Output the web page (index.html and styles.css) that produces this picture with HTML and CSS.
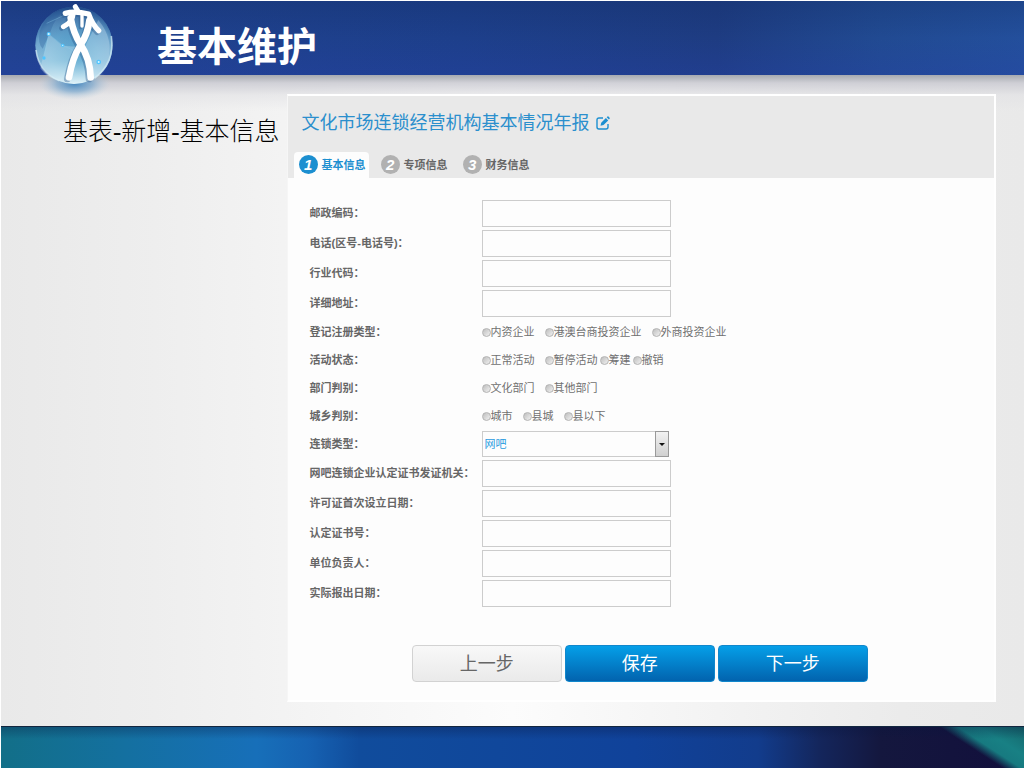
FILE: index.html
```html
<!DOCTYPE html>
<html lang="zh-CN">
<head>
<meta charset="utf-8">
<meta name="viewport" content="width=device-width, initial-scale=1">
<title>基本维护</title>
<link rel="stylesheet" href="styles.css">
</head>
<body>
<header class="banner">
  <svg class="logo" viewBox="0 0 330 300" aria-hidden="true">
    <defs>
      <radialGradient id="globe" cx="0.5" cy="0.62" r="0.62">
        <stop offset="0" stop-color="#4d9fcb"/>
        <stop offset="0.5" stop-color="#6fb2d6"/>
        <stop offset="0.8" stop-color="#78aed2"/>
        <stop offset="1" stop-color="#3466a3"/>
      </radialGradient>
      <linearGradient id="shine" x1="0" y1="0" x2="0" y2="1">
        <stop offset="0" stop-color="#173c7c" stop-opacity="0.75"/>
        <stop offset="0.4" stop-color="#3f7eb5" stop-opacity="0.3"/>
        <stop offset="0.7" stop-color="#c4e4f0" stop-opacity="0.2"/>
        <stop offset="1" stop-color="#eefbfd" stop-opacity="0.9"/>
      </linearGradient>
      <radialGradient id="glow">
        <stop offset="0" stop-color="#3b82bd" stop-opacity="0.95"/>
        <stop offset="0.5" stop-color="#6ba0cb" stop-opacity="0.6"/>
        <stop offset="1" stop-color="#b9cfe0" stop-opacity="0"/>
      </radialGradient>
      <g id="mark" fill="none" stroke-linecap="round" stroke-linejoin="round">
        <path d="M166 20L174 34" stroke-width="15"/>
        <path d="M136 40Q164 32 206 42Q216 72 236 92" stroke-width="16"/>
        <path d="M160 40Q158 66 130 80" stroke-width="15"/>
        <path d="M152 54Q160 100 182 134Q210 176 212 232" stroke-width="20"/>
        <path d="M208 62Q204 102 180 138Q158 172 147 232" stroke-width="20"/>
        <path d="M186 44V78" stroke-width="10"/>
      </g>
    </defs>
    <ellipse cx="164" cy="250" rx="108" ry="50" fill="url(#glow)"/>
    <circle cx="162" cy="136" r="116" fill="url(#globe)"/>
    <circle cx="162" cy="136" r="116" fill="url(#shine)"/>
    <path d="M86 103L61 205Q80 235 125 245L170 140L128 137Z" fill="#dff2fa" opacity="0.3"/>
    <path d="M235 60Q285 120 262 190Q240 235 212 242L190 150Z" fill="#d3ecf7" opacity="0.3"/>
    <path d="M60 92Q78 40 140 24Q104 52 90 98L68 146Q52 130 60 92Z" fill="#2c5f9c" opacity="0.35"/>
    <path d="M48 150Q56 218 118 242M274 108Q284 192 224 234" fill="none" stroke="#d8f0f8" stroke-width="5" opacity="0.65"/>
    <path d="M86 102L72 174M86 102L128 136L236 186M80 70L150 38" fill="none" stroke="#8fd0ee" stroke-width="2" opacity="0.5"/>
    <g fill="#50c5ff"><circle cx="86" cy="102" r="6"/><circle cx="128" cy="136" r="5"/><circle cx="72" cy="174" r="5"/><circle cx="236" cy="186" r="7"/></g>
    <g fill="#d9f6ff"><circle cx="86" cy="102" r="3"/><circle cx="128" cy="136" r="2"/><circle cx="236" cy="186" r="3"/></g>
    <use href="#mark" x="-5" y="5" stroke="#234f83" opacity="0.35"/>
    <use href="#mark" stroke="#fff"/>
  </svg>
  <h1 class="banner-title">基本维护</h1>
</header>

<main class="stage">
  <h2 class="crumb">基表-新增-基本信息</h2>
  <section class="panel">
    <div class="panel-head">
      <h3 class="panel-title">文化市场连锁经营机构基本情况年报
        <svg class="edit-icon" viewBox="0 0 14 14" aria-hidden="true">
          <path d="M7 2H3Q1 2 1 4V11Q1 13 3 13H10Q12 13 12 11V8" fill="none" stroke="#1c8fd0" stroke-width="1.4"/>
          <path d="M4.5 9.8L5.2 6.8L9.9 2.1L12.2 4.4L7.5 9.1ZM10.7 1.3L11.5 0.5Q12 0.1 12.5 0.6L13.6 1.7Q14 2.2 13.6 2.7L12.9 3.5Z" fill="#1c8fd0"/>
        </svg>
      </h3>
      <nav class="tabs">
        <a class="tab tab-active" href="#basic"><span class="num">1</span>基本信息</a>
        <a class="tab" href="#special"><span class="num">2</span>专项信息</a>
        <a class="tab" href="#finance"><span class="num">3</span>财务信息</a>
      </nav>
    </div>
    <form class="form" id="basic">
      <div class="row"><label class="label" for="zip">邮政编码：</label><input class="field" id="zip" type="text"></div>
      <div class="row"><label class="label" for="tel">电话(区号-电话号)：</label><input class="field" id="tel" type="text"></div>
      <div class="row"><label class="label" for="industry">行业代码：</label><input class="field" id="industry" type="text"></div>
      <div class="row"><label class="label" for="address">详细地址：</label><input class="field" id="address" type="text"></div>
      <div class="row row-short" role="radiogroup" aria-labelledby="l-reg">
        <span class="label" id="l-reg">登记注册类型：</span>
        <div class="options">
          <label class="option"><input class="radio" type="radio" name="reg">内资企业</label>
          <label class="option"><input class="radio" type="radio" name="reg">港澳台商投资企业</label>
          <label class="option"><input class="radio" type="radio" name="reg">外商投资企业</label>
        </div>
      </div>
      <div class="row row-short" role="radiogroup" aria-labelledby="l-state">
        <span class="label" id="l-state">活动状态：</span>
        <div class="options">
          <label class="option"><input class="radio" type="radio" name="state">正常活动</label>
          <div class="options options-tight">
            <label class="option"><input class="radio" type="radio" name="state">暂停活动</label>
            <label class="option"><input class="radio" type="radio" name="state">筹建</label>
            <label class="option"><input class="radio" type="radio" name="state">撤销</label>
          </div>
        </div>
      </div>
      <div class="row row-short" role="radiogroup" aria-labelledby="l-dept">
        <span class="label" id="l-dept">部门判别：</span>
        <div class="options">
          <label class="option"><input class="radio" type="radio" name="dept">文化部门</label>
          <label class="option"><input class="radio" type="radio" name="dept">其他部门</label>
        </div>
      </div>
      <div class="row row-short" role="radiogroup" aria-labelledby="l-area">
        <span class="label" id="l-area">城乡判别：</span>
        <div class="options">
          <label class="option"><input class="radio" type="radio" name="area">城市</label>
          <label class="option"><input class="radio" type="radio" name="area">县城</label>
          <label class="option"><input class="radio" type="radio" name="area">县以下</label>
        </div>
      </div>
      <div class="row row-short">
        <label class="label" for="chain">连锁类型：</label>
        <div class="select-wrap">
          <select class="select" id="chain"><option>网吧</option></select>
          <span class="select-arrow"></span>
        </div>
      </div>
      <div class="row"><label class="label" for="issuer">网吧连锁企业认定证书发证机关：</label><input class="field" id="issuer" type="text"></div>
      <div class="row"><label class="label" for="first">许可证首次设立日期：</label><input class="field" id="first" type="text"></div>
      <div class="row"><label class="label" for="cert">认定证书号：</label><input class="field" id="cert" type="text"></div>
      <div class="row"><label class="label" for="head">单位负责人：</label><input class="field" id="head" type="text"></div>
      <div class="row"><label class="label" for="report">实际报出日期：</label><input class="field" id="report" type="text"></div>
      <div class="actions">
        <button class="btn btn-plain" type="button">上一步</button>
        <button class="btn" type="button">保存</button>
        <button class="btn" type="button">下一步</button>
      </div>
    </form>
  </section>
</main>
<footer class="footer"></footer>
</body>
</html>
```
FILE: styles.css
```css
* { box-sizing: border-box; }

body {
  margin: 0;
  min-height: 100vh;
  display: flex;
  flex-direction: column;
  border: solid #fff;
  border-width: 1px 0 0 1px;
  font-family: "Liberation Sans", "Noto Sans CJK SC", sans-serif;
  color: #555;
}

h1, h2, h3 { margin: 0; }

.banner {
  position: relative;
  height: 74px;
  flex: none;
  display: flex;
  align-items: center;
  padding: 18px 0 0 156px;
  background:
    linear-gradient(180deg, rgba(14, 40, 90, 0.25), rgba(30, 60, 150, 0) 50%, rgba(40, 66, 170, 0.3)),
    linear-gradient(90deg, #20428f 0%, #1d3f8b 45%, #1e3c82 70%, #214a92 86%, #234f9c 100%);
}

.logo {
  position: absolute;
  left: 19px;
  top: -1px;
  width: 110px;
  height: 100px;
}

.banner-title {
  font-size: 40px;
  line-height: 48px;
  font-weight: 700;
  color: #fff;
}

.stage {
  flex: 1;
  display: grid;
  grid-template-columns: 28% 1fr;
  align-items: start;
  padding: 19px 28px 24px 0;
  background:
    linear-gradient(180deg, #a6aab0 0, rgba(200, 200, 208, 0.8) 8px, rgba(225, 225, 228, 0.6) 20px, rgba(235, 235, 235, 0) 36px),
    linear-gradient(90deg, #e9e9e9 0%, #eeeeee 15%, #fcfcfc 50%, #ebebeb 88%, #e9e9e9 100%);
}

.crumb {
  justify-self: end;
  padding: 20px 0 0;
  font-family: "Liberation Serif", "Noto Sans CJK SC", serif;
  font-size: 25px;
  line-height: 36px;
  font-weight: 300;
  color: #000;
  white-space: nowrap;
}

.panel {
  margin-left: 7px;
  background: #fdfdfd;
  border: 2px solid #fff;
  border-left: 1px solid #f6f6f6;
}

.panel-head {
  padding: 12px 6px 0;
  background: #e9e9e9;
}

.panel-title {
  display: flex;
  align-items: center;
  gap: 6px;
  padding-left: 8px;
  font-size: 18px;
  line-height: 30px;
  font-weight: 400;
  color: #2b8fcd;
}

.edit-icon { width: 14px; height: 14px; }

.tabs {
  display: flex;
  gap: 7px;
  padding-top: 14px;
}

.tab {
  display: flex;
  align-items: center;
  gap: 4px;
  height: 26px;
  padding: 0 3px 2px 5px;
  border-radius: 4px 4px 0 0;
  font-size: 11px;
  font-weight: 700;
  color: #666;
  text-decoration: none;
}

.tab-active { background: #fdfdfd; color: #1c8fd0; }

.num {
  width: 19px;
  height: 19px;
  border-radius: 50%;
  background: #b1b1b1;
  color: #fff;
  font-size: 15px;
  line-height: 19px;
  font-style: italic;
  text-align: center;
}

.tab-active .num { background: #1c8fd0; }

.form { padding: 20px 24px 18px 22px; }

.row {
  display: grid;
  grid-template-columns: 172px 1fr;
  align-items: center;
  min-height: 30px;
}

.row-short { min-height: 28px; }

.label {
  font-size: 11px;
  line-height: 16px;
  font-weight: 700;
  color: #666;
}

.field {
  width: 189px;
  height: 27px;
  padding: 0 4px;
  border: 1px solid #ccc;
  background: #fdfdfd;
  font: inherit;
  font-size: 11px;
}

.options { display: flex; gap: 10px; }
.options-tight { gap: 2px; }

.option {
  display: flex;
  align-items: center;
  font-size: 11px;
  line-height: 16px;
  color: #707070;
}

.radio {
  appearance: none;
  width: 9px;
  height: 9px;
  margin: 1px 0 0;
  border: 1px solid #b4b4b4;
  border-radius: 50%;
  background: linear-gradient(135deg, #bdbdbd, #f2f2f2);
}

.radio:checked { background: radial-gradient(circle, #1c6fa8 35%, #eee 45%); }

.select-wrap {
  position: relative;
  width: 187px;
}

.select {
  display: block;
  appearance: none;
  width: 100%;
  height: 26px;
  padding: 0 16px 0 2px;
  border: 1px solid #ccc;
  border-radius: 0;
  background: #fdfdfd;
  font: inherit;
  font-size: 11px;
  color: #2a9be0;
}

.select-arrow {
  position: absolute;
  right: 0;
  top: 0;
  bottom: 0;
  width: 14px;
  display: grid;
  place-items: center;
  border: 1px solid #999;
  background: linear-gradient(#f2f2f2, #d0d0d0);
  pointer-events: none;
}

.select-arrow::before {
  content: "";
  border: solid transparent;
  border-width: 3px 3px 0;
  border-top-color: #111;
}

.actions {
  display: flex;
  justify-content: center;
  gap: 3px;
  padding-top: 37px;
}

.btn {
  width: 150px;
  height: 37px;
  padding: 0;
  border: 1px solid #1187cc;
  border-radius: 4px;
  background: linear-gradient(#059fe8, #0263ae);
  font: inherit;
  font-size: 18px;
  line-height: 24px;
  color: #fff;
}

.btn-plain {
  border-color: #d2d2d2;
  background: linear-gradient(#f8f8f8, #eaeaea);
  color: #666;
}

.footer {
  height: 42px;
  flex: none;
  border-top: 1px solid #12263f;
  background:
    linear-gradient(180deg, rgba(8, 20, 60, 0.3), rgba(8, 20, 60, 0) 12px),
    linear-gradient(213deg, #15666b 0, #188084 24px, #177a80 36px, rgba(20, 17, 58, 0) 46px),
    linear-gradient(90deg, #126f88 0%, #1470a0 12%, #176fb9 25%, #1662b2 30%, #104c9c 35%, #10429a 62%, #123c8c 74%, #14265c 80%, #14173e 86%, #120f3c 100%);
}
```
